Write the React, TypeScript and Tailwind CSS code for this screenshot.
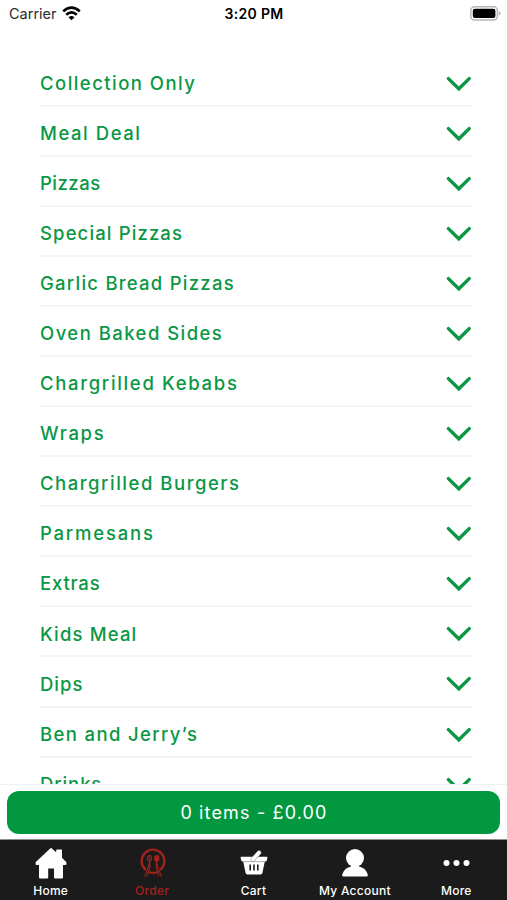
import clsx from "clsx";
import type { ReactNode } from "react";

const categories = [
  { name: "Collection Only", tracking: "tracking-[1.45px]" },
  { name: "Meal Deal", tracking: "tracking-[1.55px]" },
  { name: "Pizzas", tracking: "tracking-[0.5px]" },
  { name: "Special Pizzas", tracking: "tracking-[1.12px]" },
  { name: "Garlic Bread Pizzas", tracking: "tracking-[1.24px]" },
  { name: "Oven Baked Sides", tracking: "tracking-[1.45px]" },
  { name: "Chargrilled Kebabs", tracking: "tracking-[1.67px]" },
  { name: "Wraps", tracking: "tracking-[1.7px]" },
  { name: "Chargrilled Burgers", tracking: "tracking-[1.52px]" },
  { name: "Parmesans", tracking: "tracking-[1.79px]" },
  { name: "Extras", tracking: "tracking-[0.8px]" },
  { name: "Kids Meal", tracking: "tracking-[1.15px]" },
  { name: "Dips", tracking: "tracking-[1px]" },
  { name: "Ben and Jerry’s", tracking: "tracking-[1.37px]" },
  { name: "Drinks", tracking: "tracking-[0.9px]" },
];

const HomeIcon = () => (
  <svg width="32" height="32" viewBox="0 0 32 32" fill="currentColor" stroke="currentColor" strokeWidth="1.6" strokeLinejoin="round">
    <path d="M16 1.8 22 7.2V3.2H26.2V11L30.6 15.6V17.2H27.2V30.6H19.8V20.6H12.4V30.6H4.8V17.2H1.4V15.6Z" />
  </svg>
);

const OrderIcon = () => (
  <svg width="26" height="30" viewBox="0 0 26 30" fill="none" stroke="currentColor" strokeLinecap="round">
    <path d="M5.2 21.4A11.4 11.4 0 1 1 20.8 21.4M9.4 24.2Q13 25.6 16.6 24.2" strokeWidth="2.3" />
    <ellipse cx="9.4" cy="10.4" rx="2" ry="2.8" strokeWidth="1.2" />
    <path d="M9 8.2 9.6 11.8" strokeWidth="0.8" />
    <path d="M9.6 13.6 8.2 18.8 4.8 28.4M9.6 13.6 9.8 19.4 7.4 27.6" strokeWidth="1.1" />
    <ellipse cx="16.8" cy="10.4" rx="2.7" ry="3.3" fill="currentColor" stroke="none" />
    <path d="M16.4 13.6 16.2 19.4 18.6 27.6M16.4 13.6 17.8 18.8 21.2 28.4" strokeWidth="1.1" />
  </svg>
);

const CartIcon = () => (
  <svg width="28" height="26" viewBox="0 0 28 26">
    <path d="M1.2 6.8H26.8Q27.6 6.8 27.4 7.6L26.8 10.6Q26.6 11.4 25.8 11.4H2.2Q1.4 11.4 1.2 10.6L.6 7.6Q.4 6.8 1.2 6.8Z" fill="currentColor" />
    <path d="M3.2 11.4H24.8L22.4 23Q22 24.4 20.6 24.4H7.4Q6 24.4 5.6 23Z" fill="currentColor" />
    <path d="M3 11.7H25" stroke="#a8a8a8" strokeWidth="0.6" />
    <path d="M10.2 14.4V20.6M14 14.4V20.6M17.8 14.4V20.6" stroke="#1b1b1b" strokeWidth="1.6" />
    <path d="M13 9.2 19 2.8" stroke="#8a8a8a" strokeWidth="4.6" strokeLinecap="round" />
    <path d="M13 9.2 19 2.8" stroke="currentColor" strokeWidth="3.7" strokeLinecap="round" />
  </svg>
);

const AccountIcon = () => (
  <svg width="28" height="30" viewBox="0 0 28 30" fill="currentColor">
    <circle cx="14" cy="10" r="9" />
    <path d="M10.6 17H17.4L18 18.6Q24 19.8 26.4 25.6 27.6 28.6 25.6 28.6H2.4Q.4 28.6 1.6 25.6 4 19.8 10 18.6Z" />
  </svg>
);

const MoreIcon = () => (
  <svg width="28" height="8" viewBox="0 0 28 8" fill="currentColor">
    <circle cx="3.5" cy="4" r="3" />
    <circle cx="13.5" cy="4" r="3" />
    <circle cx="23.5" cy="4" r="3" />
  </svg>
);

const tabs: { label: string; icon: ReactNode; active?: boolean }[] = [
  { label: "Home", icon: <HomeIcon /> },
  { label: "Order", icon: <OrderIcon />, active: true },
  { label: "Cart", icon: <CartIcon /> },
  { label: "My Account", icon: <AccountIcon /> },
  { label: "More", icon: <MoreIcon /> },
];

function StatusBar() {
  return (
    <header className="grid h-[27px] shrink-0 grid-cols-3 items-center pl-[9px] pr-[6px] text-black">
      <div className="flex items-center gap-[5px]">
        <span className="text-[14.5px] text-[#2a2a2a]">Carrier</span>
        <svg width="19" height="15" viewBox="0 0 19 15" fill="none" stroke="currentColor" strokeWidth="2.6">
          <path d="M1.2 5.4Q9.5-2.2 17.8 5.4" />
          <path d="M4.2 8.8Q9.5 4 14.8 8.8" />
          <path d="M6.5 11.2Q9.5 8.6 12.5 11.2L9.5 14.2Z" fill="currentColor" stroke="none" />
        </svg>
      </div>
      <span className="-ml-[2px] text-center text-[14px] font-semibold tracking-[0.35px]">3:20 PM</span>
      <svg className="justify-self-end" width="31" height="15" viewBox="0 0 31 15">
        <rect x="0.8" y="0.8" width="26.6" height="13.2" rx="3.8" fill="#fff" stroke="#b5b5b5" strokeWidth="1.5" />
        <rect x="2.8" y="2.8" width="22.6" height="9.2" rx="2" fill="#000" />
        <path d="M28.8 5.2Q30.6 5.8 30.6 7.4T28.8 9.6Z" fill="#b5b5b5" />
      </svg>
    </header>
  );
}

export default function App() {
  return (
    <div className="flex h-screen w-full flex-col overflow-hidden bg-white font-['Inter','Liberation_Sans',sans-serif]">
      <StatusBar />

      <main className="min-h-0 flex-1 overflow-hidden pl-10 pr-[35px] pt-[29.5px]">
        {categories.map((category) => (
          <button
            key={category.name}
            className="flex h-[50.08px] w-[432px] items-center justify-between border-b-2 border-[#f4f4f4] pt-[5px] text-left text-[#0b9745]"
          >
            <span className={clsx("mt-px whitespace-nowrap text-[18.5px] font-medium", category.tracking)}>{category.name}</span>
            <svg className="mt-px" width="26" height="16" viewBox="0 0 26 16" fill="none" stroke="currentColor" strokeWidth="3.4">
              <path d="M2.4 2.6 12.8 12.8 23.2 2.6" strokeLinecap="round" />
            </svg>
          </button>
        ))}
      </main>

      <div className="h-[55px] shrink-0 border-t border-[#ecf1f3] px-[7px] pt-[6px]">
        <button className="flex h-[43px] w-full items-center justify-center rounded-xl bg-[#02983f] pl-px text-[18px] tracking-[1.15px] text-white">
          0 items - £0.00
        </button>
      </div>

      <nav className="grid h-[61px] shrink-0 grid-cols-5 border-t border-[#8d8d8d] bg-[#1b1b1b] text-white">
        {tabs.map((tab) => (
          <a key={tab.label} className={clsx("flex flex-col items-center pt-[6px]", tab.active && "text-[#a3221e]")}>
            <div className="flex h-[34px] items-center justify-center pl-px">{tab.icon}</div>
            <span className="mt-[2px] whitespace-nowrap text-[12px] font-medium leading-[18px] tracking-[0.25px]">{tab.label}</span>
          </a>
        ))}
      </nav>
    </div>
  );
}
